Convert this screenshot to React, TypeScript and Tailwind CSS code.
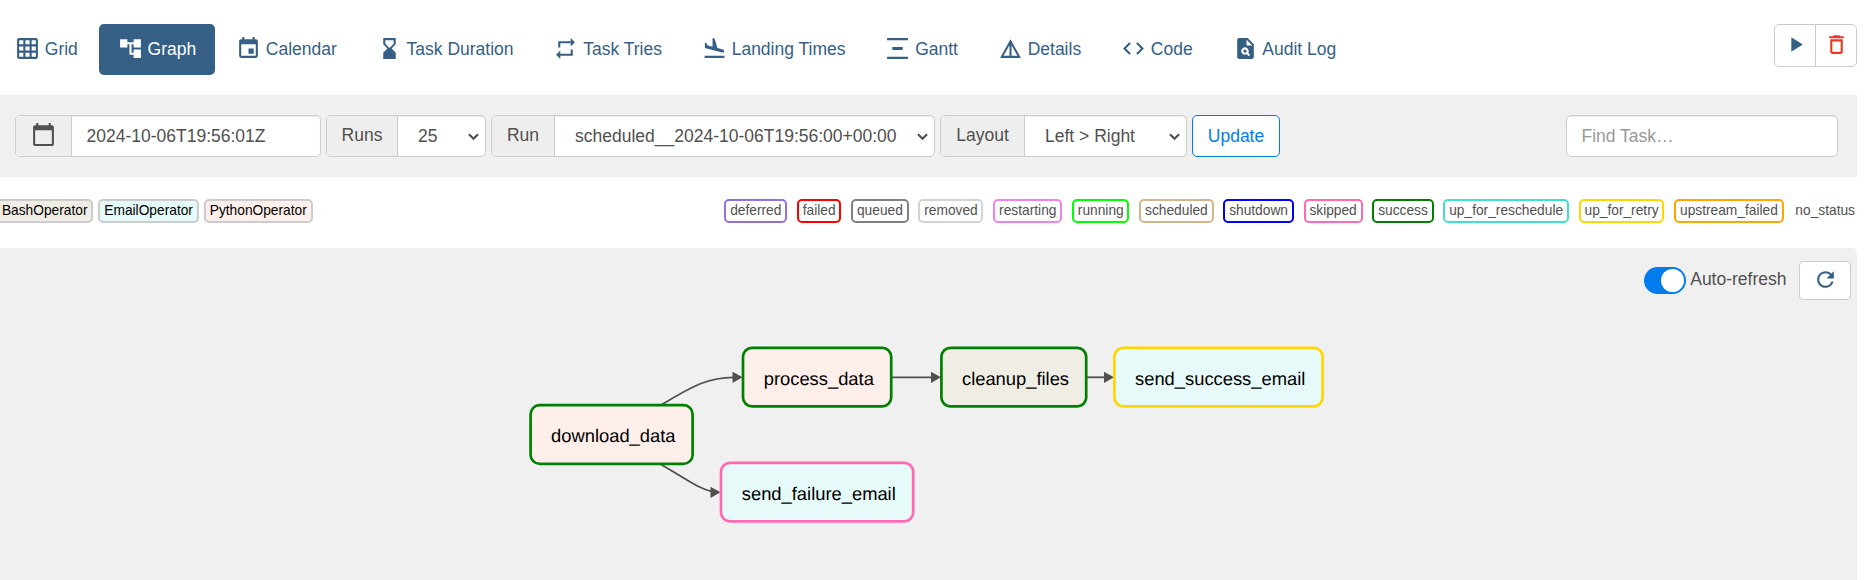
import type { ReactNode } from "react";
import type { IconType } from "react-icons";
import {
  MdAccountTree,
  MdCalendarToday,
  MdCode,
  MdDeleteOutline,
  MdDetails,
  MdEvent,
  MdFlightLand,
  MdGridOn,
  MdHourglassBottom,
  MdPlagiarism,
  MdPlayArrow,
  MdRefresh,
  MdRepeat,
  MdVerticalDistribute,
} from "react-icons/md";

const tabs: { label: string; icon: IconType; active?: boolean }[] = [
  { label: "Grid", icon: MdGridOn },
  { label: "Graph", icon: MdAccountTree, active: true },
  { label: "Calendar", icon: MdEvent },
  { label: "Task Duration", icon: MdHourglassBottom },
  { label: "Task Tries", icon: MdRepeat },
  { label: "Landing Times", icon: MdFlightLand },
  { label: "Gantt", icon: MdVerticalDistribute },
  { label: "Details", icon: MdDetails },
  { label: "Code", icon: MdCode },
  { label: "Audit Log", icon: MdPlagiarism },
];

const operators = [
  { label: "BashOperator", color: "bg-[#f0ede4]" },
  { label: "EmailOperator", color: "bg-[#e6faf9]" },
  { label: "PythonOperator", color: "bg-[#ffefeb]" },
];

const states = [
  { label: "deferred", color: "border-[#9370db]" },
  { label: "failed", color: "border-[#ff0000]" },
  { label: "queued", color: "border-[#808080]" },
  { label: "removed", color: "border-[#d3d3d3]" },
  { label: "restarting", color: "border-[#ee82ee]" },
  { label: "running", color: "border-[#00ff00]" },
  { label: "scheduled", color: "border-[#d2b48c]" },
  { label: "shutdown", color: "border-[#0000ff]" },
  { label: "skipped", color: "border-[#ff69b4]" },
  { label: "success", color: "border-[#008000]" },
  { label: "up_for_reschedule", color: "border-[#40e0d0]" },
  { label: "up_for_retry", color: "border-[#ffd700]" },
  { label: "upstream_failed", color: "border-[#ffa500]" },
];

// Node coordinates are relative to the top-left corner of the graph panel.
const nodes = [
  { id: "download_data", x: 530.6, y: 157.2, w: 162, fill: "#ffefeb", stroke: "#008000" },
  { id: "process_data", x: 743, y: 99.8, w: 148.2, fill: "#ffefeb", stroke: "#008000" },
  { id: "send_failure_email", x: 721, y: 214.8, w: 192.2, fill: "#e6faf9", stroke: "#ff69b4" },
  { id: "cleanup_files", x: 941.4, y: 99.8, w: 144.8, fill: "#f0ede4", stroke: "#008000" },
  { id: "send_success_email", x: 1114.4, y: 99.8, w: 208.2, fill: "#e6faf9", stroke: "#ffd700" },
];

const edges = [
  "M661 157 C690 140 706 129.3 734 129.3",
  "M661 216.5 C688 232 698 240.5 713 243.8",
  "M892 129.3 H932",
  "M1087 129.3 H1105",
];

const arrows = [
  [742.5, 129.3],
  [720.5, 244.3],
  [941, 129.3],
  [1114, 129.3],
];

function Chevron() {
  return (
    <svg className="mr-[6px] ml-auto mt-[2px] shrink-0" width="11" height="8" viewBox="0 0 11 8" fill="none">
      <path d="M1 1.3 5.5 5.8 10 1.3" stroke="#51504f" strokeWidth="2.2" />
    </svg>
  );
}

function Group({ label, width, addon, children }: { label: ReactNode; width: string; addon: string; children: ReactNode }) {
  return (
    <div className={`flex h-[42px] overflow-hidden rounded-[5px] border border-[#ccc] bg-white ${width}`}>
      <div className={`flex shrink-0 items-center justify-center border-r border-[#ccc] bg-[#eee] pb-[2px] ${addon}`}>{label}</div>
      <div className="flex min-w-0 flex-1 items-center whitespace-pre shadow-[inset_0_1px_1px_rgba(0,0,0,0.075)]">{children}</div>
    </div>
  );
}

function Toolbar() {
  return (
    <div className="flex h-[82px] items-center gap-[5px] bg-[#f0f0f0] pl-[15px] pr-[19px]">
      <Group width="w-[306px]" addon="w-[56px]" label={<MdCalendarToday size={25} className="-mt-[2px]" />}>
        <span className="pl-[14.5px]">2024-10-06T19:56:01Z</span>
      </Group>
      <Group width="w-[160px]" addon="w-[71px]" label="Runs">
        <span className="pl-[20px]">25</span>
        <Chevron />
      </Group>
      <Group width="w-[444px]" addon="w-[63px]" label="Run">
        <span className="pl-[20px]">scheduled__2024-10-06T19:56:00+00:00</span>
        <Chevron />
      </Group>
      <Group width="w-[247px]" addon="w-[84px]" label="Layout">
        <span className="pl-[20px]">Left &gt; Right</span>
        <Chevron />
      </Group>
      <button className="h-[42px] w-[88px] rounded-[5px] border border-[#017cee] bg-white text-[#017cee]">Update</button>
      <div className="ml-auto flex h-[42px] w-[272px] items-center rounded-[5px] border border-[#ccc] bg-white pl-[14.5px] text-[#999] shadow-[inset_0_1px_1px_rgba(0,0,0,0.075)]">
        Find Task…
      </div>
    </div>
  );
}

function Graph() {
  return (
    <svg className="absolute inset-0" width="1857" height="332" viewBox="0 0 1857 332">
      <g fill="none" stroke="#51504f" strokeWidth="1.8">
        {edges.map((d) => (
          <path key={d} d={d} />
        ))}
      </g>
      {arrows.map(([x, y]) => (
        <path key={`${x}-${y}`} d={`M${x} ${y} l-10 -5.6 v11.2 z`} fill="#51504f" />
      ))}
      {nodes.map((n) => (
        <g key={n.id}>
          <rect x={n.x} y={n.y} width={n.w} height="58.6" rx="9" fill={n.fill} stroke={n.stroke} strokeWidth="2.7" />
          <text x={n.x + n.w / 2 + 1.7} y={n.y + 37.2} textAnchor="middle" fontSize="18.35" fill="#000" textRendering="geometricPrecision">
            {n.id}
          </text>
        </g>
      ))}
    </svg>
  );
}

export default function App() {
  return (
    <div className="h-[580px] w-full overflow-hidden bg-white font-['Liberation_Sans',Arial,sans-serif] text-[17.5px] leading-[25px] text-[#51504f]">
      <div className="flex h-full w-[1857px] flex-col">
        <header className="flex h-[95px] shrink-0 items-start justify-between pt-[24px]">
          <nav className="-ml-[3.75px] flex gap-[2.38px] text-[#355f84]">
            {tabs.map(({ label, icon: Icon, active }) => (
              <a
                key={label}
                className={`flex h-[51px] items-center gap-[4.8px] whitespace-nowrap rounded-[5px] px-[18.75px] ${active ? "bg-[#355f84] text-white" : ""}`}
              >
                <Icon size={25} className="-mt-[2px] shrink-0" />
                {label}
              </a>
            ))}
          </nav>
          <div className="flex h-[43px] w-[83px] rounded-[5px] border border-[#ccc]">
            <button className="flex flex-1 items-center justify-center border-r border-[#ccc] pb-[2px] text-[#355f84]">
              <MdPlayArrow size={25} />
            </button>
            <button className="flex flex-1 items-center justify-center pb-[2px] text-[#e43921]">
              <MdDeleteOutline size={25} />
            </button>
          </div>
        </header>
        <Toolbar />
        <div className="flex h-[71px] shrink-0 items-start justify-between pt-[22px] text-[13.75px] leading-[20px]">
          <div className="-ml-[4px] flex gap-[5px] text-black">
            {operators.map((o) => (
              <span key={o.label} className={`h-[24px] rounded-[5px] border-2 border-[#ccc] px-[3.9px] ${o.color}`}>
                {o.label}
              </span>
            ))}
          </div>
          <div className="flex">
            {states.map((s) => (
              <span key={s.label} className={`mr-[9.88px] h-[24px] rounded-[5px] border-2 px-[3.75px] ${s.color}`}>
                {s.label}
              </span>
            ))}
            <span className="pl-[1.9px] pr-[2px] pt-[2px]">no_status</span>
          </div>
        </div>
        <main className="relative flex-1 rounded-tr-[5px] bg-[#f0f0f0]">
          <Graph />
          <div className="relative flex items-start justify-end pr-[6px] pt-[13px]">
            <div className="mt-[6px] flex h-[27px] w-[42px] items-center justify-end rounded-full bg-[#017cee] pr-[1.5px]">
              <div className="size-[23.5px] rounded-full bg-white" />
            </div>
            <span className="ml-[4.5px] mr-[12.5px] mt-[6px]">Auto-refresh</span>
            <button className="flex h-[39px] w-[52px] items-center justify-center rounded-[4px] border border-[#ccc] bg-white pb-[2px] text-[#355f84]">
              <MdRefresh size={25} />
            </button>
          </div>
        </main>
      </div>
    </div>
  );
}
